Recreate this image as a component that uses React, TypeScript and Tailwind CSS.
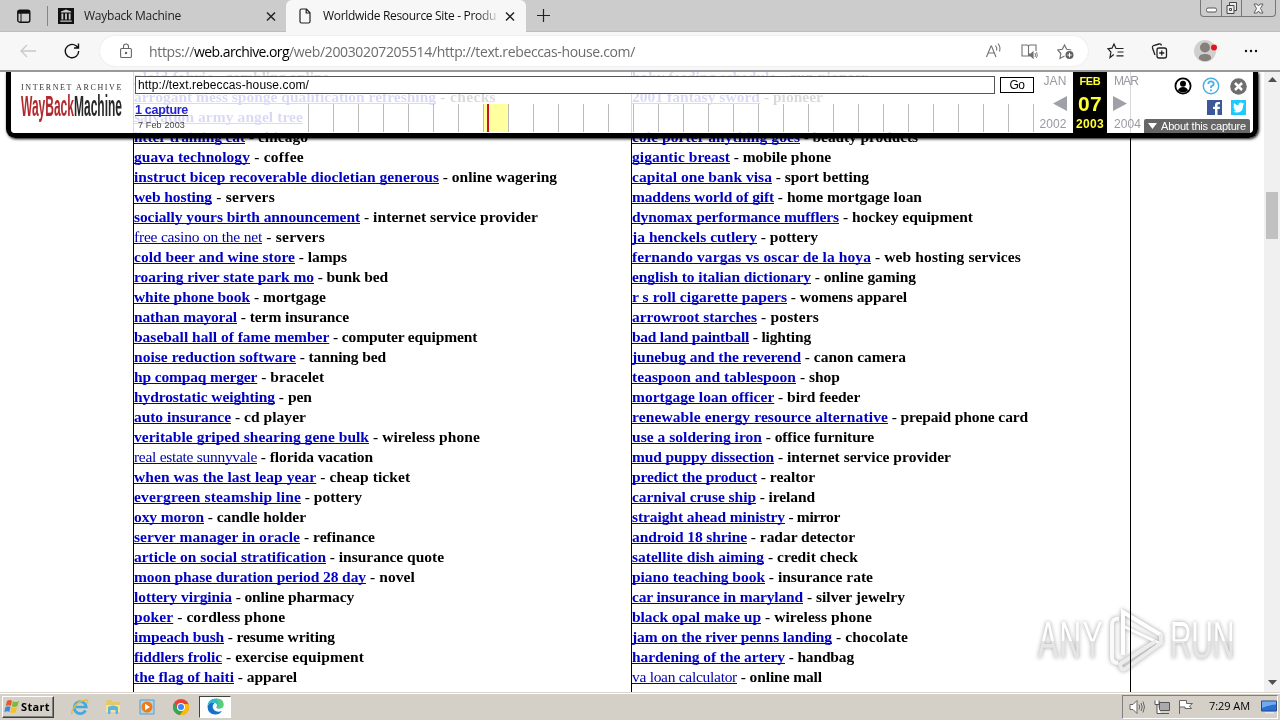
import React, { useLayoutEffect, useRef } from "react";

/** Text whose letter spacing is adjusted so that the run fills `w` pixels. */
function Fit({ w, className = "", children }: { w: number; className?: string; children: string }) {
  const ref = useRef<HTMLSpanElement>(null);
  useLayoutEffect(() => {
    const el = ref.current;
    if (!el) return;
    el.style.letterSpacing = "0px";
    const natural = el.getBoundingClientRect().width;
    el.style.letterSpacing = `${(w - natural) / children.length}px`;
  }, [w, children]);
  return (
    <span ref={ref} className={`whitespace-pre ${className}`}>
      {children}
    </span>
  );
}

// [link text, x where the link ends, description, x where the row ends, plain weight]
type Row = [string, number, string, number, boolean?];

const left: Row[] = [
  ["plaid fabric", 213, "gambling online", 329],
  ["arrogant mess sponge qualification refreshing", 436, "checks", 496],
  ["salvation army angel tree", 303, "", 303],
  ["litter training cat", 245, "chicago", 308],
  ["guava technology", 250, "coffee", 304],
  ["instruct bicep recoverable diocletian generous", 439, "online wagering", 557],
  ["web hosting", 212, "servers", 275],
  ["socially yours birth announcement", 360, "internet service provider", 538],
  ["free casino on the net", 262, "servers", 325, true],
  ["cold beer and wine store", 295, "lamps", 347],
  ["roaring river state park mo", 314, "bunk bed", 388],
  ["white phone book", 250, "mortgage", 326],
  ["nathan mayoral", 237, "term insurance", 349],
  ["baseball hall of fame member", 329, "computer equipment", 477],
  ["noise reduction software", 296, "tanning bed", 386],
  ["hp compaq merger", 257, "bracelet", 324],
  ["hydrostatic weighting", 275, "pen", 312],
  ["auto insurance", 231, "cd player", 306],
  ["veritable griped shearing gene bulk", 369, "wireless phone", 480],
  ["real estate sunnyvale", 257, "florida vacation", 373, true],
  ["when was the last leap year", 316, "cheap ticket", 410],
  ["evergreen steamship line", 301, "pottery", 362],
  ["oxy moron", 204, "candle holder", 306],
  ["server manager in oracle", 300, "refinance", 375],
  ["article on social stratification", 326, "insurance quote", 444],
  ["moon phase duration period 28 day", 366, "novel", 415],
  ["lottery virginia", 232, "online pharmacy", 354],
  ["poker", 173, "cordless phone", 285],
  ["impeach bush", 224, "resume writing", 335],
  ["fiddlers frolic", 222, "exercise equipment", 364],
  ["the flag of haiti", 234, "apparel", 297],
  ["barbara handley", 243, "special training", 346],
];

const right: Row[] = [
  ["baby feeding schedule", 776, "gun pioneer", 868],
  ["2001 fantasy sword", 760, "pioneer", 823],
  ["", 632, "", 632],
  ["cole porter anything goes", 800, "beauty products", 918],
  ["gigantic breast", 730, "mobile phone", 831],
  ["capital one bank visa", 772, "sport betting", 869],
  ["maddens world of gift", 774, "home mortgage loan", 922],
  ["dynomax performance mufflers", 839, "hockey equipment", 973],
  ["ja henckels cutlery", 757, "pottery", 818],
  ["fernando vargas vs oscar de la hoya", 871, "web hosting services", 1021],
  ["english to italian dictionary", 811, "online gaming", 916],
  ["r s roll cigarette papers", 787, "womens apparel", 907],
  ["arrowroot starches", 757, "posters", 819],
  ["bad land paintball", 749, "lighting", 811],
  ["junebug and the reverend", 801, "canon camera", 906],
  ["teaspoon and tablespoon", 796, "shop", 840],
  ["mortgage loan officer", 774, "bird feeder", 860],
  ["renewable energy resource alternative", 888, "prepaid phone card", 1028],
  ["use a soldering iron", 762, "office furniture", 874],
  ["mud puppy dissection", 774, "internet service provider", 951],
  ["predict the product", 757, "realtor", 815],
  ["carnival cruse ship", 756, "ireland", 815],
  ["straight ahead ministry", 785, "mirror", 840],
  ["android 18 shrine", 747, "radar detector", 855],
  ["satellite dish aiming", 764, "credit check", 858],
  ["piano teaching book", 765, "insurance rate", 873],
  ["car insurance in maryland", 803, "silver jewelry", 905],
  ["black opal make up", 761, "wireless phone", 872],
  ["jam on the river penns landing", 832, "chocolate", 908],
  ["hardening of the artery", 785, "handbag", 854],
  ["va loan calculator", 737, "online mall", 822, true],
  ["american rat breeders", 766, "", 766],
];

function Column({ rows, x }: { rows: Row[]; x: number }) {
  return (
    <div className="font-bold text-black">
      {rows.map(([link, linkEnd, desc, end, plain], i) => (
        <div key={i} className="h-5 whitespace-pre leading-5">
          {link && (
            <Fit
              w={linkEnd - x}
              className={
                plain
                  ? "font-normal text-[#0000b0] underline decoration-1 underline-offset-[1px] [text-decoration-skip-ink:none]"
                  : "text-[#0000c4] underline decoration-1 underline-offset-[1px] [text-decoration-skip-ink:none]"
              }
            >
              {link}
            </Fit>
          )}
          {desc && <Fit w={end - linkEnd}>{` - ${desc}`}</Fit>}
        </div>
      ))}
    </div>
  );
}

function TabClose() {
  return (
    <svg className="size-3 shrink-0" viewBox="0 0 12 12" fill="none" stroke="#222" strokeWidth="1.5">
      <path d="M2 2.500l8 8M10 2.500l-8 8" />
    </svg>
  );
}

function TabBar() {
  return (
    <div className="flex h-8 shrink-0 bg-[#cccccc] font-['Open_Sans',sans-serif] text-[12px]">
      <div className="flex w-[286px] shrink-0 items-center border-b border-[#bdbdbd]">
        <svg className="ml-[17px] size-[14px] shrink-0" viewBox="0 0 14 14" fill="none" stroke="#111" strokeWidth="1.400">
          <rect x="0.800" y="1.200" width="12" height="12" rx="2" />
          <path d="M0.800 3h12" strokeWidth="3.400" />
          <path d="M4 4v9" strokeWidth="1" />
        </svg>
        <div className="ml-[16px] h-5 w-px shrink-0 bg-[#858585]" />
        <svg className="ml-[10px] h-4 w-[16px] shrink-0" viewBox="0 0 14 16" preserveAspectRatio="none">
          <path fill="#111" d="M0 0h14v16H0z" />
          <path fill="#ccc" d="M2.500 3.500L7 1.500l4.500 2v1h-9zM3 5.500h1.600v6H3zM6.200 5.500h1.600v6H6.200zM9.400 5.500H11v6H9.400zM2 12.500h10v1.300H2z" />
        </svg>
        <div className="ml-[10px] w-[181px] shrink-0 text-[#222]">
          <Fit w={97}>Wayback Machine</Fit>
        </div>
        <TabClose />
      </div>
      <div className="flex w-[240px] shrink-0 items-center rounded-t-[6px] bg-[#f7f7f7]">
        <svg className="ml-[13px] h-4 w-3 shrink-0" viewBox="0 0 12 16" fill="none" stroke="#222" strokeWidth="1.200">
          <path d="M2.500 1h5L11 4.800V13.500a1.500 1.500 0 0 1-1.500 1.500h-7A1.500 1.500 0 0 1 1 13.500v-11A1.500 1.500 0 0 1 2.500 1zM7.200 1v4H11" />
        </svg>
        <div className="relative ml-[12px] mr-[8px] w-[173px] text-[#111]">
          <Fit w={173}>Worldwide Resource Site - Produ</Fit>
          <div className="absolute inset-y-0 right-0 w-5 bg-gradient-to-r from-transparent to-[#f7f7f7]/80" />
        </div>
        <TabClose />
      </div>
      <div className="flex flex-1 items-center border-b border-[#bdbdbd]">
        <svg className="ml-[11px] size-[13px]" viewBox="0 0 13 13" stroke="#222" strokeWidth="1.200">
          <path d="M6.500 0v13M0 6.500h13" />
        </svg>
        <div className="ml-auto mr-[4px] flex h-[17px] w-[76px] self-start rounded-b-[4px] border border-t-0 border-[#777]">
          <div className="flex w-[21px] items-center justify-center border-r border-[#777]">
            <svg className="mt-1 h-[6px] w-[11px]" viewBox="0 0 11 6">
              <rect x="0.500" y="1" width="10" height="4" rx="1.500" fill="#fff" stroke="#555" />
            </svg>
          </div>
          <div className="flex w-[20px] items-center justify-center border-r border-[#777]">
            <svg className="size-3" viewBox="0 0 12 12" fill="#eee" stroke="#444">
              <path d="M3.500 0.500h7v8h-7z" />
              <path d="M1 3.500h7v8H1z" />
              <path d="M3.500 6.500h2v2h-2z" />
            </svg>
          </div>
          <div className="flex flex-1 items-center justify-center">
            <svg className="size-[11px]" viewBox="0 0 11 11" fill="#f5f5f5" stroke="#555" strokeWidth="0.900">
              <path d="M1 1h3l1.500 2L7 1h3L7.500 5.500 10 10H7L5.500 8 4 10H1l2.500-4.500z" />
            </svg>
          </div>
        </div>
      </div>
    </div>
  );
}

function AddressBar() {
  return (
    <div className="flex h-[40px] shrink-0 items-center border-b-2 border-[#999] bg-[#f7f7f7] font-['Open_Sans',sans-serif]">
      <svg className="ml-[19px] h-4 w-[18px] shrink-0" viewBox="0 0 18 16" fill="none" stroke="#c8c8c8" strokeWidth="1.300">
        <path d="M8 2L2 8l6 6M2 8h15" />
      </svg>
      <svg className="ml-[27px] size-4 shrink-0" viewBox="0 0 16 16" fill="none" stroke="#111" strokeWidth="1.400">
        <path d="M14.700 8a6.700 6.700 0 1 1-2.600-5.200L14 4.800M14.500 0.500v4.500H10" />
      </svg>
      <div className="ml-[20px] flex h-[30px] w-[988px] shrink-0 items-center rounded-full bg-white shadow-[0_0_2px_#ddd]">
        <svg className="ml-[20px] h-[16px] w-[12px] shrink-0" viewBox="0 0 12 16" fill="none" stroke="#666" strokeWidth="1.100">
          <rect x="0.600" y="5.500" width="10.800" height="9" rx="1" />
          <path d="M3.500 5.500V3.500a2.500 2.500 0 0 1 5 0v2" />
          <circle cx="6" cy="10" r="0.700" fill="#666" />
        </svg>
        <div className="ml-[17px] flex-1 whitespace-pre text-[14px] text-[#6c6c6c]">
          <Fit w={45}>https://</Fit>
          <Fit w={95} className="text-black">web.archive.org</Fit>
          <Fit w={346}>/web/20030207205514/http://text.rebeccas-house.com/</Fit>
        </div>
        <div className="flex items-center gap-[19px] pr-[14px]">
          <svg className="h-4 w-[17px] shrink-0" viewBox="0 0 16 16" fill="none" stroke="#707070" strokeWidth="1.100">
            <path d="M1 14L5.500 3h.500L10.500 14M2.700 10h6M10 2.500q2 2.500 1 5M12.500 0.500q3 3.500 1.500 8" />
          </svg>
          <svg className="h-4 w-[17px] shrink-0" viewBox="0 0 17 16" fill="none" stroke="#707070" strokeWidth="1.100">
            <path d="M7.500 13H1V2h5q1.500 0 1.500 1.500V13M7.500 3.500Q7.500 2 9 2h6v6" />
            <path d="M8 11h2l2-2v6l-2-2H8z" fill="#707070" />
            <path d="M14 10q1 2 0 4M15.500 9q1.500 3 0 6" strokeWidth="0.900" />
          </svg>
          <svg className="h-[17px] w-[17px] shrink-0" viewBox="0 0 17 17" fill="none" stroke="#707070" strokeWidth="1.200">
            <path d="M7.500 13L3 15.500l.800-5L0.800 7l4.500-.700L7.500 2l2.200 4.300 4.500.700" />
            <circle cx="12.500" cy="12" r="4" fill="#606060" stroke="none" />
            <path d="M12.500 9.800v4.400M10.300 12h4.400" stroke="#fff" strokeWidth="1" />
          </svg>
        </div>
      </div>
      <svg className="ml-[19px] h-4 w-[17px] shrink-0" viewBox="0 0 17 16" fill="none" stroke="#222" strokeWidth="1.200">
        <path d="M6.800 11.500L3 14.500l.900-5.500L1 5.800 5 5.200 7 1l2 4.500h7.500M10.500 9h6M9.500 12.800h7" />
      </svg>
      <svg className="ml-[27px] h-4 w-[17px] shrink-0" viewBox="0 0 17 16" fill="none" stroke="#222" strokeWidth="1.300">
        <rect x="6" y="5" width="9.500" height="10" rx="2" />
        <path d="M10.750 7.500v5M8.250 10h5M4 12L1.500 5Q1 3 2.500 2.500L8 1q2-.5 2.500 1.500" />
      </svg>
      <svg className="ml-[26px] size-[24px] shrink-0" viewBox="0 0 24 24">
        <circle cx="11" cy="12" r="11" fill="#d2d0ce" />
        <circle cx="11" cy="8.500" r="5" fill="#86807c" />
        <path d="M5 20q-1-5 6-5t6 5q-6 4.500-12 0z" fill="#86807c" />
        <circle cx="20" cy="8.500" r="3" fill="#e8111a" />
      </svg>
      <svg className="ml-[26px] h-4 w-[14px] shrink-0" viewBox="0 0 14 16" fill="#111">
        <circle cx="2" cy="8" r="1.200" />
        <circle cx="7" cy="8" r="1.200" />
        <circle cx="12" cy="8" r="1.200" />
      </svg>
    </div>
  );
}

function ArchiveToolbar() {
  return (
    <div className="absolute left-[6px] top-0 flex h-[66px] w-[1252px] overflow-hidden rounded-b-[9px] border-[5px] border-t-0 border-black bg-white/85 font-['Liberation_Sans',sans-serif] shadow-[1px_1px_3px_#000]">
      <div className="w-[122px] shrink-0 bg-white pl-[10px] pt-[10px]">
        <div className="h-[12px] font-['Liberation_Serif',serif] text-[8px] leading-[11px] text-[#333]">
          <Fit w={102}>INTERNET ARCHIVE</Fit>
        </div>
        <div className="h-7 w-[103px]">
          <div className="w-[103px] origin-top-left scale-y-[2.450] whitespace-pre text-[12px] font-bold leading-[11px]">
            <Fit w={53} className="text-[#b2292e]">WayBack</Fit>
            <Fit w={48} className="text-[#272727]">Machine</Fit>
          </div>
        </div>
      </div>
      <div className="flex w-[903px] shrink-0 flex-col">
        <div className="flex h-[24px] items-center gap-[5px] pl-[2px] pt-[2px]">
          <div className="flex h-[18px] w-[860px] items-center border border-[#555] bg-white pl-[2px] text-[12px] text-black">
            <Fit w={171}>http://text.rebeccas-house.com/</Fit>
          </div>
          <div className="flex h-[16px] w-[34px] items-center justify-center border border-black bg-white text-[12px] text-black">
            <Fit w={15}>Go</Fit>
          </div>
        </div>
        <div className="flex flex-1 pt-[5px]">
          <div className="w-[175px] shrink-0 pl-[2px]">
            <div className="text-[12.500px] font-bold leading-[18px] text-[#2323cc] underline [text-decoration-skip-ink:none]">
              <Fit w={53}>1 capture</Fit>
            </div>
            <div className="mt-[1px] pl-[3px] text-[9px] leading-[10px] text-[#444]">
              <Fit w={47}>7 Feb 2003</Fit>
            </div>
          </div>
          <div className="mt-[3px] flex h-[28px]">
            {Array.from({ length: 30 }, (_, i) => (
              <div
                key={i}
                className={
                  i === 7
                    ? "w-[25px] border-l border-[#bbb] bg-[#ffffa0] pl-[3px]"
                    : i === 29
                      ? "w-px border-l border-[#bbb]"
                      : "w-[25px] border-l border-[#bbb]"
                }
              >
                {i === 7 && <div className="h-full w-[2px] bg-[#cc1133]" />}
              </div>
            ))}
          </div>
        </div>
      </div>
      <div className="flex w-[37px] shrink-0 flex-col items-center pl-px text-[12px] text-[#9999a3]">
        <div className="h-[20px] leading-[18px]">
          <Fit w={23}>JAN</Fit>
        </div>
        <svg className="ml-[9px] mt-[4px] h-[15px] w-[14px] shrink-0" viewBox="0 0 13 15" preserveAspectRatio="none">
          <path d="M13 0v15L0 7.500z" fill="#a0a0a8" />
        </svg>
        <div className="mr-1 mt-[4px] leading-[18px]">
          <Fit w={27}>2002</Fit>
        </div>
      </div>
      <div className="flex w-[34px] shrink-0 flex-col items-center bg-black text-[12px] font-bold text-[#ffff33]">
        <div className="h-[20px] text-[11px] leading-[18px]">
          <Fit w={21}>FEB</Fit>
        </div>
        <div className="text-[21px] leading-[23px]">
          <Fit w={24}>07</Fit>
        </div>
        <div className="leading-[18px]">
          <Fit w={28}>2003</Fit>
        </div>
      </div>
      <div className="flex w-[40px] shrink-0 flex-col items-start pl-[7px] text-[12px] text-[#9999a3]">
        <div className="h-[20px] leading-[18px]">
          <Fit w={24}>MAR</Fit>
        </div>
        <svg className="-ml-px mt-[4px] h-[15px] w-[14px] shrink-0" viewBox="0 0 13 15" preserveAspectRatio="none">
          <path d="M0 0v15l13-7.500z" fill="#a0a0a8" />
        </svg>
        <div className="mt-[4px] leading-[18px]">
          <Fit w={27}>2004</Fit>
        </div>
      </div>
      <div className="flex w-[106px] shrink-0 flex-col items-end">
        <div className="mt-[5px] flex items-center gap-[10px] pr-[6px]">
          <svg className="size-[18px]" viewBox="0 0 18 18">
            <circle cx="9" cy="9" r="7.600" fill="#fff" stroke="#000" strokeWidth="1.800" />
            <circle cx="9" cy="6.800" r="3" />
            <path d="M4 13.500q1-3.500 5-3.500t5 3.500q-5 4-10 0z" />
          </svg>
          <svg className="size-[18px]" viewBox="0 0 18 18" fill="none" stroke="#4daee0" strokeWidth="1.500">
            <circle cx="9" cy="9" r="7.700" />
            <path d="M6.300 7q0-2.700 2.700-2.700T11.700 7Q11.700 8.500 9 9.500V11M9 12.500v1.700" strokeWidth="1.800" />
          </svg>
          <svg className="size-[17px]" viewBox="0 0 17 17">
            <circle cx="8.500" cy="8.500" r="8.300" fill="#6e6e6e" />
            <path d="M5 5l7 7M12 5l-7 7" stroke="#fff" strokeWidth="2.500" />
          </svg>
        </div>
        <div className="mt-[5px] flex gap-[9px] pr-[7px]">
          <svg className="size-[15px]" viewBox="0 0 15 15">
            <path d="M0 0h15v15H0z" fill="#3b5998" />
            <path d="M8 15V9H6V6.700h2V5q0-3 3-3h2v2.300h-1.500q-1 0-1 1v1.400H13L12.700 9h-2.200v6z" fill="#fff" />
          </svg>
          <svg className="size-[15px]" viewBox="0 0 15 15">
            <path d="M0 0h15v15H0z" fill="#1dcaff" />
            <path d="M3 3q2 2.200 4.500 2.200Q7.500 2.500 10 2.500q1 0 1.600.700L13 2.800 12 4.500l1 0-1 1.200q0 6.800-6.500 6.800-2 0-3.300-1 1.800 0 2.800-.900-1.700-.4-2-1.600h1Q2.500 8.200 2.300 6.300l1 .300Q2.200 5 3 3z" fill="#fff" />
          </svg>
        </div>
        <div className="mr-[3px] mt-auto flex h-[14px] w-[106px] shrink-0 items-center rounded-t-[2px] bg-[#666] pl-[4px] text-[11px] leading-[14px] text-white">
          <svg className="mr-[4px] h-[6px] w-[9px] shrink-0" viewBox="0 0 9 6" fill="#fff">
            <path d="M0 0h9L4.500 6z" />
          </svg>
          <Fit w={85}>About this capture</Fit>
        </div>
      </div>
    </div>
  );
}

function BrandMark() {
  return (
    <div className="absolute left-[1038px] top-[536px] flex h-[66px] items-center font-['Liberation_Sans',sans-serif] text-[30px] leading-[34px] mix-blend-multiply drop-shadow-[0_0_2px_rgba(0,0,0,0.38)]">
      <div className="w-[66px] scale-y-[1.700] bg-gradient-to-b from-white from-50% to-[#e6e6e6] to-50% bg-clip-text text-transparent">
        <Fit w={66}>ANY</Fit>
      </div>
      <svg className="ml-[5px] h-[64px] w-[56px]" viewBox="0 0 56 64" fill="none" strokeWidth="4">
        <path d="M10 10Q3 9 3 16v32q0 6 6 6" stroke="#fafafa" />
        <path d="M14 46V3l38 23" stroke="#fff" />
        <path d="M14 46V17l38 18" stroke="#fff" strokeWidth="3" />
        <path d="M52 25v9L16 60q-4 2-5-5l36-23" stroke="#ececec" />
      </svg>
      <div className="ml-[5px] w-[64px] scale-y-[1.700] bg-gradient-to-b from-white from-50% to-[#e6e6e6] to-50% bg-clip-text text-transparent">
        <Fit w={64}>RUN</Fit>
      </div>
    </div>
  );
}

function Taskbar() {
  return (
    <div className="flex h-7 shrink-0 items-center border-t border-[#d8d4cc] bg-[#d4d0c8] font-['Open_Sans',sans-serif] shadow-[inset_0_1px_0_#fff]">
      <div className="ml-[2px] flex h-[22px] w-[52px] items-center border border-b-[#404040] border-l-white border-r-[#404040] border-t-white pl-px shadow-[inset_-1px_-1px_0_#808080]">
        <svg className="size-4 shrink-0" viewBox="0 0 16 16">
          <path d="M3 2q3-2 5 0L6.800 7q-2-1.500-5 0z" fill="#e8562a" />
          <path d="M9 2.300q3 1.500 6-.300L13.500 7q-3 2-5.700.300z" fill="#7fb83c" />
          <path d="M1.500 8q3-1.500 5 0L5.300 13q-2-1.500-5 0z" fill="#3f87d8" />
          <path d="M7.700 8.300q3 1.500 5.500-.300L11.800 13q-3 2-5.500.300z" fill="#f6c022" />
        </svg>
        <div className="ml-px text-[11px] font-bold leading-[18px] text-black">
          <Fit w={29}>Start</Fit>
        </div>
      </div>
      <svg className="ml-[17px] size-[18px]" viewBox="0 0 18 18" fill="none">
        <path d="M14.500 12.500A6 6 0 1 1 15.200 9H5" stroke="#41a9df" strokeWidth="2.700" />
        <path d="M2 15Q-1 17 2 11 6 3 15 2q3 0 1 3.500" stroke="#e6bd43" strokeWidth="1.300" />
      </svg>
      <svg className="ml-[16px] size-4" viewBox="0 0 16 16">
        <path d="M1 3l1-2h5l1 2h7v10H1z" fill="#e5c967" />
        <path d="M1 6h14v7H1z" fill="#f5e497" />
        <path d="M3 8q5-3 10 0v7h-2.500v-4h-5v4H3z" fill="#5db5df" />
      </svg>
      <svg className="ml-[18px] size-4" viewBox="0 0 16 16">
        <path d="M1 1h14v14H1z" fill="#a9d5ee" stroke="#5f9cc2" />
        <circle cx="8" cy="8" r="5.500" fill="#f17a17" />
        <path d="M6 4.800v6.400L11 8z" fill="#fff" />
      </svg>
      <svg className="ml-[17px] size-[18px]" viewBox="0 0 18 18">
        <circle cx="9" cy="9" r="8" fill="#ea4335" />
        <path d="M2.100 5A8 8 0 0 0 8 17l4-6-6 0z" fill="#34a853" />
        <path d="M8 17A8 8 0 0 0 16.500 6H9l3.500 4.500z" fill="#fbbc05" />
        <circle cx="9" cy="9" r="4" fill="#fff" />
        <circle cx="9" cy="9" r="3" fill="#4285f4" />
      </svg>
      <div className="ml-[9px] flex h-[22px] w-[32px] items-center justify-center border border-b-white border-l-[#404040] border-r-white border-t-[#404040] bg-[#fdfdfd]">
        <svg className="size-[17px]" viewBox="0 0 17 17">
          <path d="M0.500 8Q1 0.500 9 0.500q7.500 0 7.500 6 0 4-4.500 4-3 0-2.500-1.500Q11 6 8 5 3 4 0.500 8z" fill="#35b8c9" />
          <path d="M0.500 8Q3 3.500 7.500 5 4 8 7 12q3 3 8 1-2.500 3.500-6.500 3.500-8 0-8-8.500z" fill="#1470c8" />
          <path d="M9 .5q7.500 0 7.500 6 0 4-4.500 4-2 0-2.500-.8Q14 7 9 .5z" fill="#56cf79" />
        </svg>
      </div>
      <div className="ml-auto mr-[2px] flex h-[24px] w-[156px] items-center border border-b-white border-l-[#808080] border-r-white border-t-[#808080]">
        <svg className="ml-[6px] size-4 shrink-0" viewBox="0 0 16 16" fill="none" stroke="#666">
          <path d="M1 5.500h3L8 1.500v13l-4-4H1z" fill="#fff" />
          <path d="M10 5.500q1.500 2.500 0 5M12 4q2.500 4 0 8M14 2.500q3 5.500 0 11" />
        </svg>
        <svg className="ml-[9px] size-4 shrink-0" viewBox="0 0 16 16" stroke="#555">
          <path d="M5.500 3.500h10v8h-10z" fill="#aaa" />
          <path d="M7 14.500h8M1 1.500v4h4v-4M3 5.500v9h4" fill="#fff" />
        </svg>
        <svg className="ml-[8px] h-4 w-[17px] shrink-0" viewBox="0 0 17 16" fill="#fff" stroke="#666">
          <path d="M1.500 15V1.500h7v3h6l-3 2.500 2 2.500H7V8H1.500" />
        </svg>
        <div className="ml-[14px] w-[52px] shrink-0 text-[11px] text-black">
          <Fit w={41}>7:29 AM</Fit>
        </div>
        <svg className="h-[14px] w-4 shrink-0" viewBox="0 0 16 14">
          <path d="M0.500 1h15v10h-15z" fill="#2a6fd1" stroke="#244a88" />
          <path d="M1 1.500h14v3Q7 5 1 8z" fill="#74aaf0" />
          <path d="M4 12h9v1.500H4z" fill="#dce8f5" />
        </svg>
      </div>
    </div>
  );
}

export default function App() {
  return (
    <div className="flex h-[720px] w-[1280px] flex-col overflow-hidden bg-white">
      <TabBar />
      <AddressBar />
      <div className="flex min-h-0 flex-1">
        <div className="relative h-[620px] w-[1264px] overflow-hidden bg-white">
          <div className="-mt-[5px] ml-[133px] flex w-[998px] border-r border-black font-['Liberation_Serif',serif] text-[15.500px]">
            <div className="w-[498px] border-l border-black">
              <Column rows={left} x={134} />
            </div>
            <div className="flex-1 border-l border-black">
              <Column rows={right} x={632} />
            </div>
          </div>
          <ArchiveToolbar />
          <BrandMark />
        </div>
        <div className="flex w-4 flex-col items-center bg-[#f0f0f0]">
          <svg className="mt-[5px] h-[5px] w-[9px]" viewBox="0 0 9 5" fill="#505050">
            <path d="M0 5L4.500 0 9 5z" />
          </svg>
          <div className="mt-[110px] h-[47px] w-3 bg-[#c1c1c1]" />
          <svg className="mb-[7px] mt-auto h-[5px] w-[9px]" viewBox="0 0 9 5" fill="#505050">
            <path d="M0 0l4.500 5L9 0z" />
          </svg>
        </div>
      </div>
      <Taskbar />
    </div>
  );
}
